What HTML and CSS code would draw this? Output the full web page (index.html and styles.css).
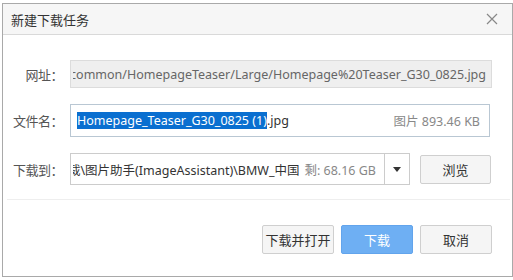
FILE: index.html
```html
<!DOCTYPE html>
<html>
<head>
<meta charset="utf-8">
<link rel="stylesheet" href="styles.css">
</head>
<body>
<div class="dialog">
  <div class="titlebar">
    <span class="title">新建下载任务</span>
    <span class="close">
      <svg width="12" height="12" viewBox="0 0 12 12"><path d="M1 1L11 11M11 1L1 11" stroke="#888" stroke-width="1.2" fill="none"/></svg>
    </span>
  </div>
  <div class="body">
    <div class="row">
      <label class="label">网址：</label>
      <div class="field url"><span class="clip"><span class="inner">common/HomepageTeaser/Large/Homepage%20Teaser_G30_0825.jpg</span></span></div>
    </div>
    <div class="row">
      <label class="label">文件名：</label>
      <div class="field name">
        <span class="fname"><span class="sel">Homepage_Teaser_G30_0825 (1)</span>.jpg</span>
        <span class="meta">图片 893.46 KB</span>
      </div>
    </div>
    <div class="row">
      <label class="label">下载到：</label>
      <div class="field path">
        <span class="clip"><span class="inner">裁\图片助手(ImageAssistant)\BMW_中国</span></span>
        <span class="meta">剩: 68.16 GB</span>
        <span class="drop"><svg width="8" height="5" viewBox="0 0 8 5"><path d="M0 0H8L4 5Z" fill="#333"/></svg></span>
      </div>
      <button class="btn browse">浏览</button>
    </div>
    <div class="sep"></div>
    <div class="actions">
      <button class="btn">下载并打开</button>
      <button class="btn primary">下载</button>
      <button class="btn">取消</button>
    </div>
  </div>
</div>
</body>
</html>
```
FILE: styles.css
```css
* { box-sizing: border-box; }
html, body { margin: 0; padding: 0; background: #fff; }
body {
  font-family: "Noto Sans", "Noto Sans CJK SC", sans-serif;
  font-size: 12.5px;
  color: #333;
}
.dialog {
  width: 511px;
  height: 274px;
  margin: 3px 0 0 2px;
  border: 1px solid #a9a9a9;
  background: #fff;
  display: flex;
  flex-direction: column;
}
.titlebar {
  height: 31px;
  background: #f6f6f6;
  border-bottom: 1px solid #d9d9d9;
  display: flex;
  align-items: center;
  justify-content: space-between;
  padding: 0 14px 0 8px;
}
.title {
  font-family: "Noto Sans CJK SC", sans-serif;
  font-size: 13px;
  color: #333;
}
.close { display: flex; }
.body {
  padding: 25px 20px 0 0;
  display: flex;
  flex-direction: column;
}
.row {
  display: flex;
  align-items: center;
  margin-bottom: 16px;
}
.label {
  width: 60px;
  margin-right: 7px;
  text-align: right;
  font-family: "Noto Sans CJK SC", sans-serif;
  font-size: 13px;
  color: #555;
  white-space: nowrap;
  letter-spacing: -0.5px;
}
.field {
  height: 28px;
  border: 1px solid #ccc;
  display: flex;
  align-items: center;
  overflow: hidden;
  white-space: nowrap;
}
.clip {
  flex: 1;
  min-width: 0;
  overflow: hidden;
  display: flex;
  justify-content: flex-end;
}
.inner { flex-shrink: 0; }
.url {
  width: 422px;
  background: #efefef;
  border-color: #dcdcdc;
  color: #666;
  padding: 0 5px 0 2px;
}
.name {
  width: 420px;
  height: 33px;
  border-color: #b9c7d3;
  justify-content: space-between;
  padding: 0 9px 0 6px;
}
.sel { background: #0a6fd0; color: #fff; }
.fname { color: #333; }
.meta { color: #888; flex-shrink: 0; }
.path {
  width: 340px;
  height: 32px;
  border-color: #ccc;
  padding-left: 2px;
}
.path .clip { color: #333; }
.path .meta { margin: 0 8px 0 5px; }
.drop {
  width: 25px;
  height: 100%;
  flex-shrink: 0;
  border-left: 1px solid #ccc;
  display: flex;
  align-items: center;
  justify-content: center;
}
.sep {
  height: 1px;
  background: #eeeeee;
  margin: -2px -18px 0 4px;
}
.btn {
  font-family: "Noto Sans CJK SC", sans-serif;
  font-size: 13px;
  color: #333;
  background: #f5f5f5;
  border: 1px solid #cfcfcf;
  border-radius: 2px;
  height: 29px;
  width: 72px;
  padding: 0;
}
.browse { margin-left: 10px; width: 71px; height: 29px; }
.actions {
  display: flex;
  justify-content: flex-end;
  gap: 7px;
  margin-top: 25px;
}
.primary {
  background: #6eaff3;
  border-color: #62a4ec;
  color: #fff;
}
```
